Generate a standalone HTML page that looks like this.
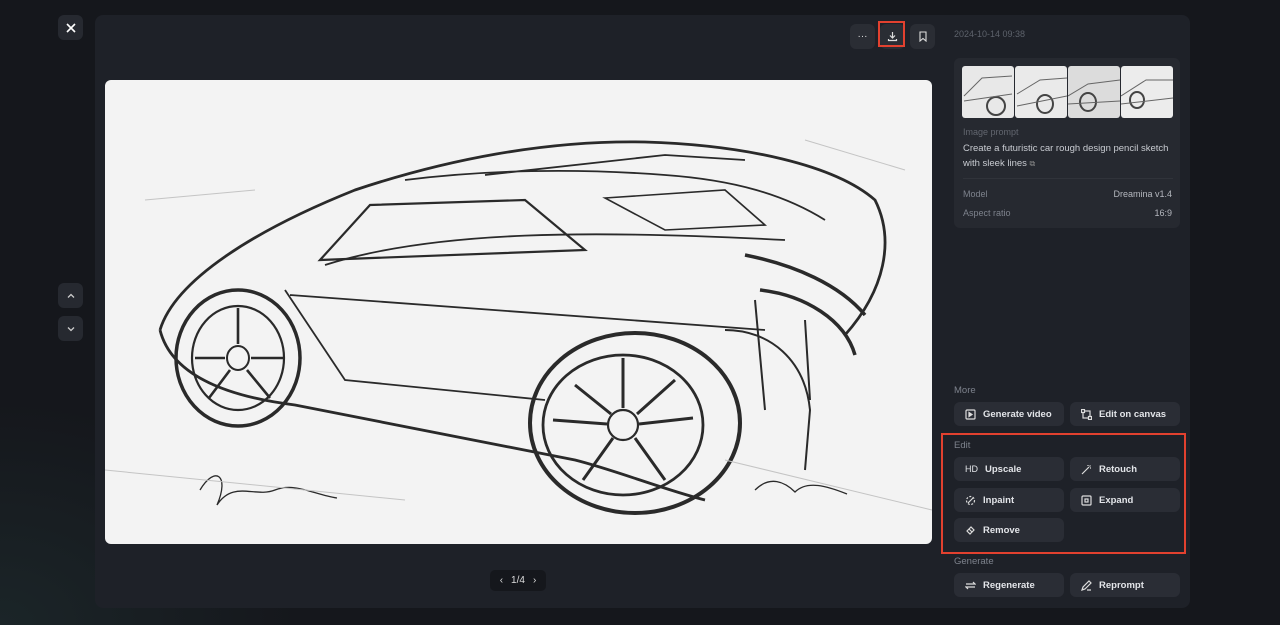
<!DOCTYPE html>
<html><head><meta charset="utf-8"><style>
*{margin:0;padding:0;box-sizing:border-box}
body{width:1280px;height:625px;overflow:hidden;background:#15171c;font-family:"Liberation Sans",sans-serif;position:relative;color:#e6e8ec}
.abs{position:absolute}
.sq{position:absolute;width:25px;height:25px;border-radius:6px;background:#262930;display:flex;align-items:center;justify-content:center}
.panel{left:95px;top:15px;width:1095px;height:593px;background:#1e2128;border-radius:8px}
.img{left:105px;top:80px;width:827px;height:464px;background:#f3f3f3;border-radius:6px;overflow:hidden}
.lbl{font-size:9px;color:#7d828c}
.btn{position:absolute;width:110px;height:24px;border-radius:6px;background:#2a2d35;font-size:9.5px;font-weight:bold;color:#e3e5e9;display:flex;align-items:center;padding-left:11px;gap:7px}
.btn svg{width:11px;height:11px}
.th{flex:1;border-radius:3px;overflow:hidden}
</style></head><body>
<div class="abs" style="left:0;top:400px;width:300px;height:225px;background:radial-gradient(ellipse at 0% 100%,#1b2528 0%,rgba(21,23,28,0) 70%)"></div>
<div class="sq" style="left:58px;top:15px"><svg width="10" height="10" viewBox="0 0 10 10"><path d="M1 1L9 9M9 1L1 9" stroke="#fff" stroke-width="1.6"/></svg></div>
<div class="abs panel"></div>
<div class="sq" style="left:58px;top:283px"><svg width="10" height="10" viewBox="0 0 10 10"><path d="M2 6.5L5 3.5L8 6.5" stroke="#ccc" stroke-width="1.3" fill="none"/></svg></div>
<div class="sq" style="left:58px;top:316px"><svg width="10" height="10" viewBox="0 0 10 10"><path d="M2 3.5L5 6.5L8 3.5" stroke="#ccc" stroke-width="1.3" fill="none"/></svg></div>
<div class="sq" style="left:850px;top:24px;background:#2a2d34;font-size:10px;color:#ddd">···</div>
<div class="sq" style="left:880px;top:24px;background:#2a2d34"><svg width="11" height="11" viewBox="0 0 11 11"><path d="M5.5 1V7M3 4.5L5.5 7L8 4.5M1.5 8V9.5H9.5V8" stroke="#ddd" stroke-width="1.2" fill="none"/></svg></div>
<div class="abs" style="left:878px;top:21px;width:27px;height:26px;border:2px solid #e2412f"></div>
<div class="sq" style="left:910px;top:24px;background:#2a2d34"><svg width="10" height="11" viewBox="0 0 10 11"><path d="M2 1H8V10L5 7.5L2 10Z" stroke="#ddd" stroke-width="1.1" fill="none"/></svg></div>
<div class="abs img"><svg width="827" height="464" viewBox="0 0 827 464" fill="none" stroke="#2a2a2a" stroke-width="1.8">
<path d="M55 250C70 200 150 150 250 110C340 80 440 60 540 62C640 65 730 85 770 120C790 160 780 210 740 255" stroke-width="2.8"/>
<path d="M300 100C380 90 470 88 560 95C630 100 680 115 720 140M380 95L560 75L640 80" stroke-width="1.8"/>
<path d="M55 250C65 290 110 315 190 325L470 380C510 390 560 410 600 420" stroke-width="2.8"/>
<path d="M220 185C330 150 490 150 680 160M185 215L660 250M180 210L240 300L440 320" />
<path d="M215 180L265 125L420 120L480 170Z" stroke-width="2.2"/>
<path d="M500 118L620 110L660 145L560 150Z" stroke-width="1.6"/>
<path d="M640 175C690 185 735 205 760 235M655 210C700 215 740 240 750 275" stroke-width="3.5"/>
<path d="M650 220L660 330M700 240L705 320" stroke-width="2"/>
<ellipse cx="133" cy="278" rx="62" ry="68" stroke-width="3.5"/>
<ellipse cx="133" cy="278" rx="46" ry="52" stroke-width="2.2"/>
<ellipse cx="133" cy="278" rx="11" ry="12" stroke-width="2"/>
<path d="M133 228V264M90 278H120M146 278H178M104 318L125 290M165 318L142 290" stroke-width="2.6"/>
<ellipse cx="530" cy="343" rx="105" ry="90" stroke-width="4"/>
<ellipse cx="518" cy="345" rx="80" ry="70" stroke-width="2.8"/>
<ellipse cx="518" cy="345" rx="15" ry="15" stroke-width="2.2"/>
<path d="M518 278V328M448 340L502 344M534 344L588 338M478 400L508 358M560 400L530 358M470 305L506 334M570 300L532 334" stroke-width="3"/>
<path d="M620 250C665 250 700 280 705 330L700 390" stroke-width="2"/>
<path d="M95 410C110 385 125 395 112 425C128 400 150 418 170 410C190 402 210 415 232 418" stroke-width="1.3"/>
<path d="M650 410C665 395 680 402 690 412C702 400 722 406 742 414" stroke-width="1.3"/>
<path d="M0 390L300 420M620 380L827 430M40 120L150 110M700 60L800 90" stroke="#c4c4c4" stroke-width="1"/>
</svg></div>
<div class="abs" style="left:490px;top:570px;width:56px;height:21px;border-radius:5px;background:#15171c;font-size:10px;color:#ddd;display:flex;align-items:center;justify-content:center;gap:8px"><span>‹</span>1/4<span>›</span></div>
<div class="abs lbl" style="left:954px;top:29px;color:#5d626b">2024-10-14 09:38</div>
<div class="abs" style="left:954px;top:58px;width:226px;height:170px;background:#262930;border-radius:6px"></div>
<div class="abs" style="left:962px;top:66px;width:211px;height:52px;display:flex;gap:1px">
<div class="th" style="background:#e8e8e8"><svg width="52" height="52"><ellipse cx="34" cy="40" rx="9" ry="9" fill="none" stroke="#444" stroke-width="2"/><path d="M2 30L20 12L50 10M2 35L50 28" stroke="#666" fill="none"/></svg></div>
<div class="th" style="background:#eaeaea"><svg width="52" height="52"><ellipse cx="30" cy="38" rx="8" ry="9" fill="none" stroke="#444" stroke-width="2"/><path d="M2 28L25 14L52 12M2 40L52 30" stroke="#666" fill="none"/></svg></div>
<div class="th" style="background:#dcdcdc"><svg width="52" height="52"><ellipse cx="20" cy="36" rx="8" ry="9" fill="none" stroke="#444" stroke-width="2"/><path d="M0 30L20 18L52 14M0 38L52 35" stroke="#666" fill="none"/></svg></div>
<div class="th" style="background:#ececec"><svg width="52" height="52"><ellipse cx="16" cy="34" rx="7" ry="8" fill="none" stroke="#444" stroke-width="2"/><path d="M0 30L25 14L52 14M0 38L52 32" stroke="#666" fill="none"/></svg></div></div>
<div class="abs lbl" style="left:963px;top:127px;color:#62666f">Image prompt</div>
<div class="abs" style="left:963px;top:141px;width:210px;font-size:9.5px;line-height:15px;color:#c9ccd2">Create a futuristic car rough design pencil sketch with sleek lines <span style="font-size:8px;color:#888">⧉</span></div>
<div class="abs" style="left:963px;top:178px;width:210px;height:1px;background:#30333a"></div>
<div class="abs lbl" style="left:963px;top:189px">Model</div>
<div class="abs lbl" style="right:108px;top:189px;color:#b5b8bf">Dreamina v1.4</div>
<div class="abs lbl" style="left:963px;top:208px">Aspect ratio</div>
<div class="abs lbl" style="right:108px;top:208px;color:#b5b8bf">16:9</div>
<div class="abs lbl" style="left:954px;top:385px;font-size:9.5px">More</div>
<div class="btn" style="left:954px;top:402px"><svg viewBox="0 0 11 11" fill="none" stroke="#ddd" stroke-width="1.2"><rect x="1" y="1" width="9" height="9" rx="1"/><path d="M4 3.5L7 5.5L4 7.5Z" fill="#ddd"/></svg>Generate video</div>
<div class="btn" style="left:1070px;top:402px"><svg viewBox="0 0 11 11" fill="none" stroke="#ddd" stroke-width="1.2"><rect x="2" y="2" width="7" height="7"/><rect x="0.5" y="0.5" width="3" height="3" fill="#2a2d35"/><rect x="7.5" y="7.5" width="3" height="3" fill="#2a2d35"/></svg>Edit on canvas</div>
<div class="abs" style="left:941px;top:433px;width:245px;height:121px;border:2px solid #e2412f"></div>
<div class="abs lbl" style="left:954px;top:440px;font-size:9.5px">Edit</div>
<div class="btn" style="left:954px;top:457px"><span style="font-size:9px;font-weight:normal">HD</span>Upscale</div>
<div class="btn" style="left:1070px;top:457px"><svg viewBox="0 0 11 11" fill="none" stroke="#ddd" stroke-width="1.2"><path d="M1 10L8 3M7 1V2M10 4H9M9.5 1.5L8.5 2.5"/></svg>Retouch</div>
<div class="btn" style="left:954px;top:488px"><svg viewBox="0 0 11 11" fill="none" stroke="#ddd" stroke-width="1.2"><circle cx="5.5" cy="5.5" r="4" stroke-dasharray="2 1.5"/><path d="M3 8L8 3"/></svg>Inpaint</div>
<div class="btn" style="left:1070px;top:488px"><svg viewBox="0 0 11 11" fill="none" stroke="#ddd" stroke-width="1.2"><rect x="1" y="1" width="9" height="9" rx="1"/><rect x="4" y="4" width="3" height="3"/></svg>Expand</div>
<div class="btn" style="left:954px;top:518px"><svg viewBox="0 0 11 11" fill="none" stroke="#ddd" stroke-width="1.2"><path d="M2 6L6 2L9 5L5 9Z M4 4L7 7"/></svg>Remove</div>
<div class="abs lbl" style="left:954px;top:556px;font-size:9.5px">Generate</div>
<div class="btn" style="left:954px;top:573px"><svg viewBox="0 0 11 11" fill="none" stroke="#ddd" stroke-width="1.2"><path d="M1 4H10L8 2M10 7H1L3 9"/></svg>Regenerate</div>
<div class="btn" style="left:1070px;top:573px"><svg viewBox="0 0 11 11" fill="none" stroke="#ddd" stroke-width="1.2"><path d="M1 10L2 7L8 1L10 3L4 9Z M6 10H10"/></svg>Reprompt</div>
</body></html>
